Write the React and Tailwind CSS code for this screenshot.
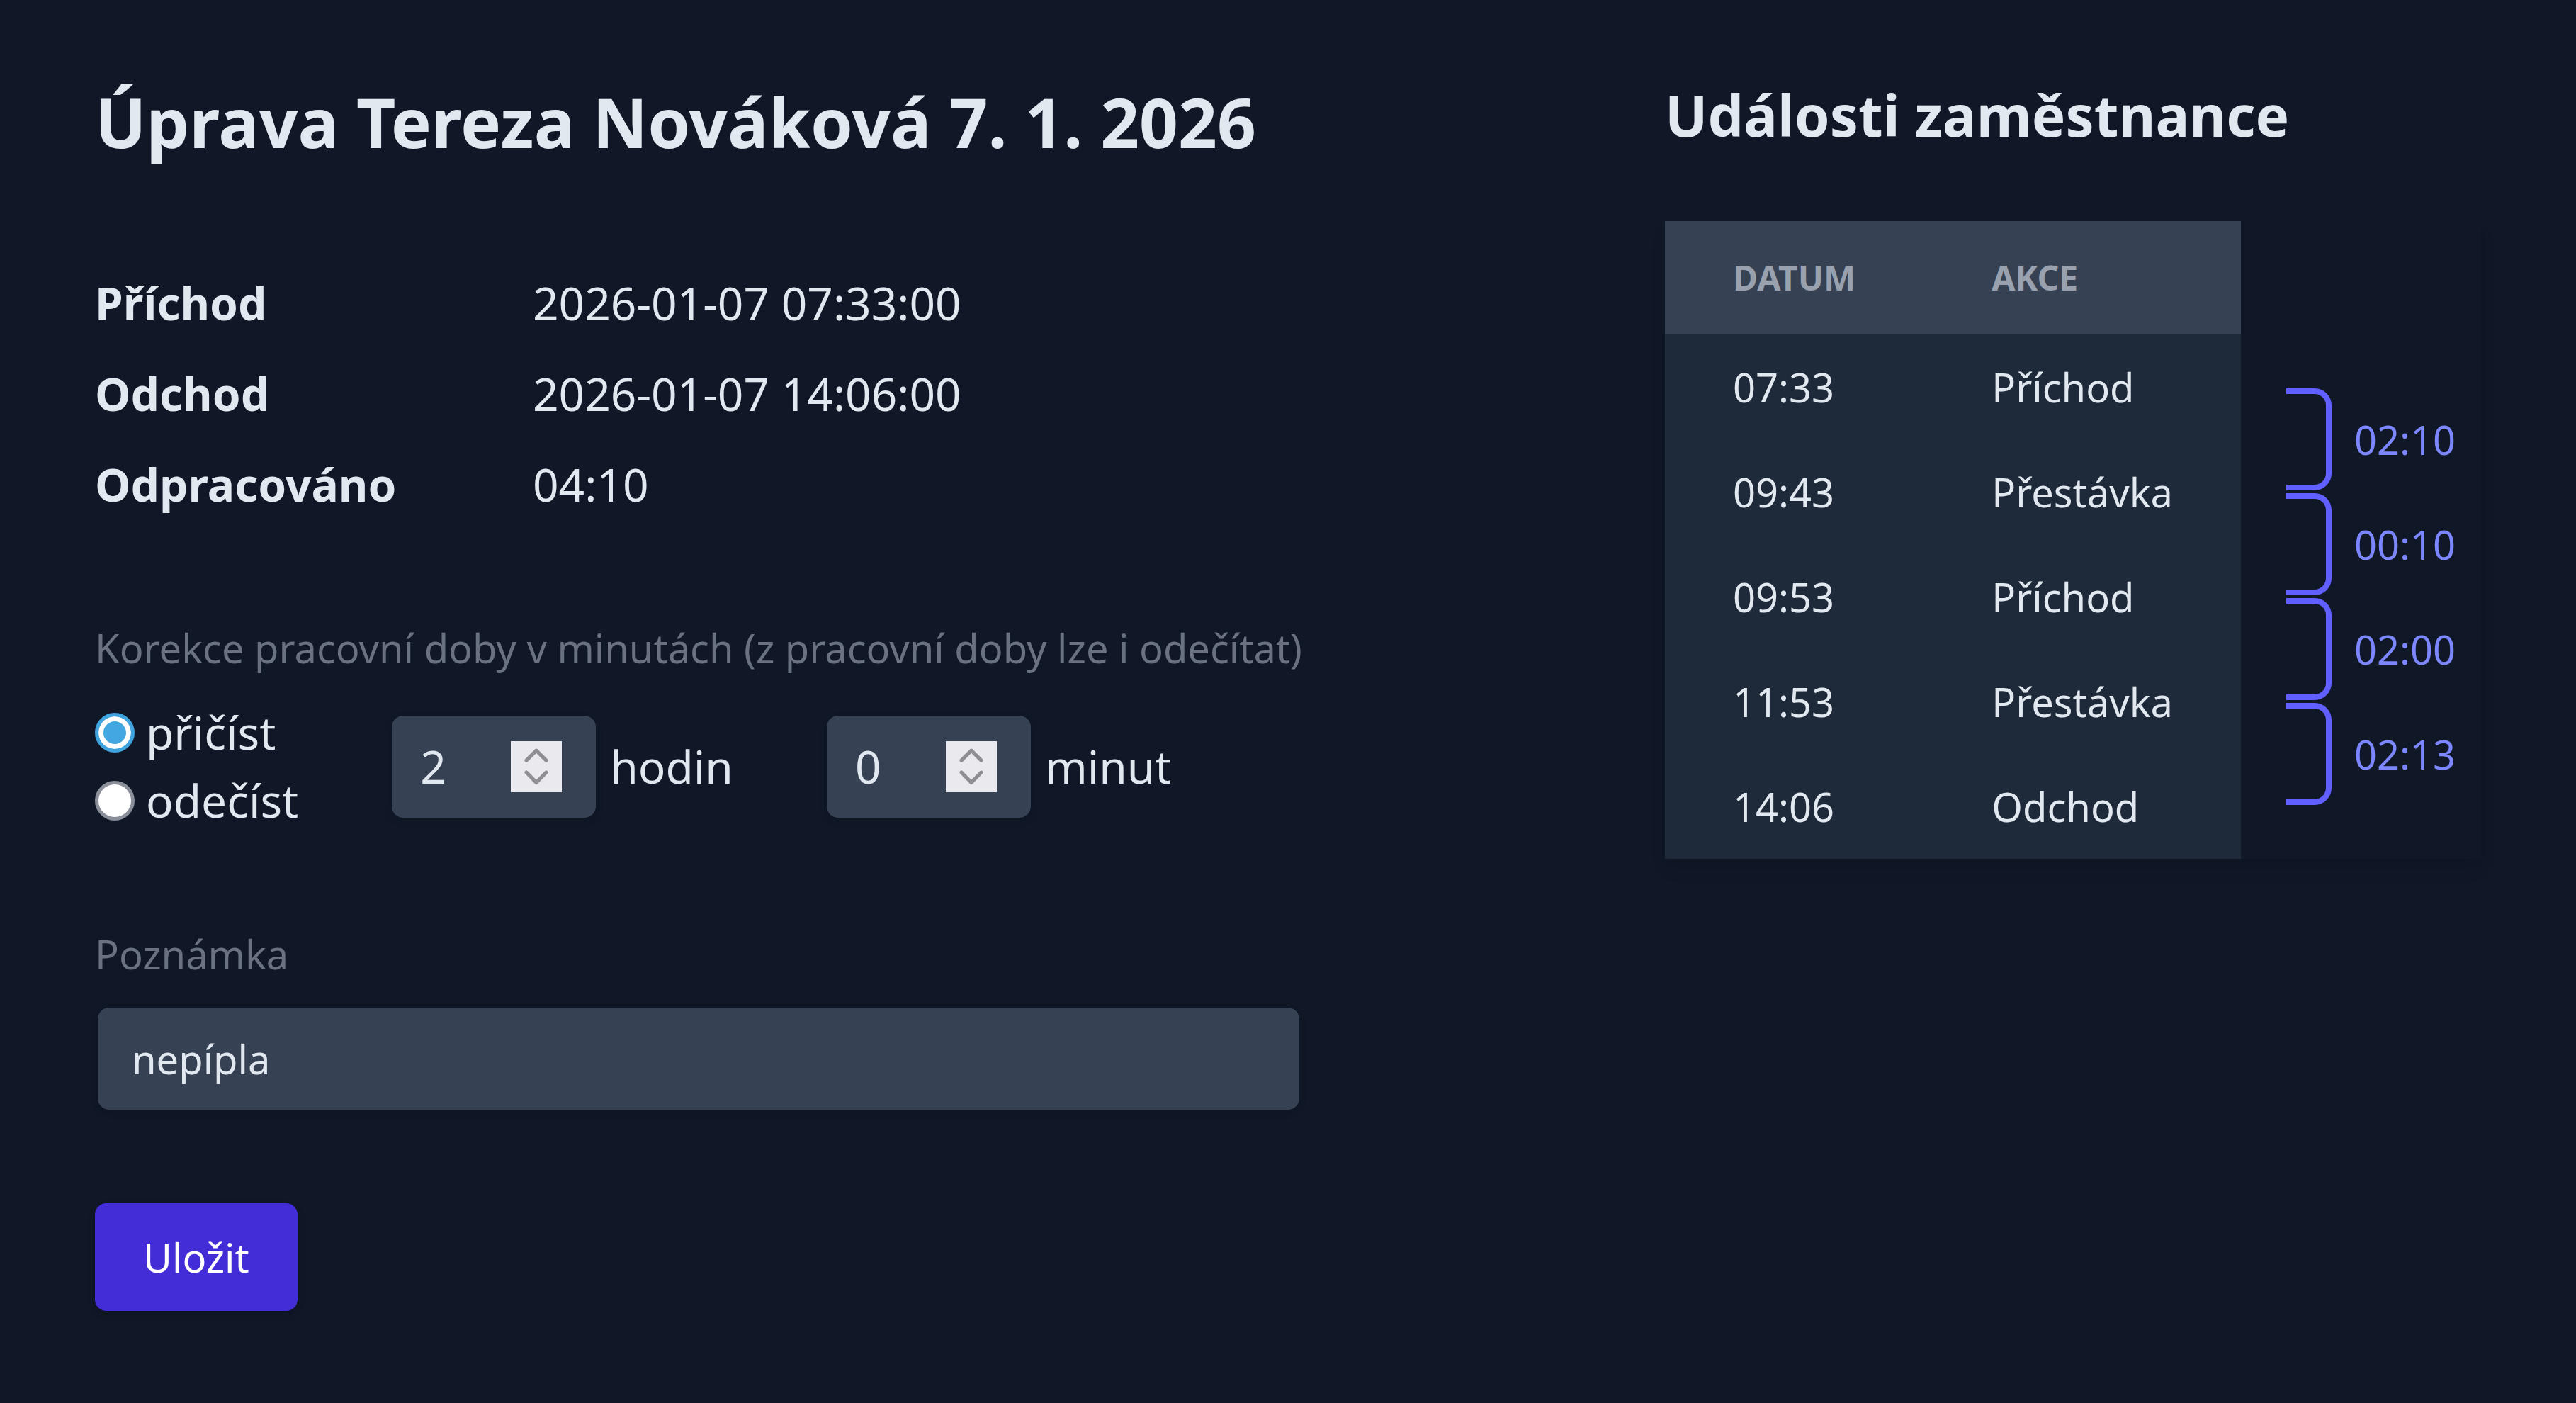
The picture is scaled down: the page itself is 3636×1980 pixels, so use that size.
import { useState } from 'react';

const events = [
  { time: '07:33', action: 'Příchod' },
  { time: '09:43', action: 'Přestávka' },
  { time: '09:53', action: 'Příchod' },
  { time: '11:53', action: 'Přestávka' },
  { time: '14:06', action: 'Odchod' },
];

const intervals = ['02:10', '00:10', '02:00', '02:13'];

const summary = [
  { label: 'Příchod', value: '2026-01-07 07:33:00' },
  { label: 'Odchod', value: '2026-01-07 14:06:00' },
  { label: 'Odpracováno', value: '04:10' },
];

const Spinner = () => (
  <span className="flex h-[18px] w-[18px] shrink-0 items-center justify-center bg-[#e9e9ee]">
    <svg viewBox="0 0 18 18" className="h-[18px] w-[18px]" fill="none" stroke="#8e8e93" strokeWidth="1.3" strokeLinecap="round" strokeLinejoin="round">
      <polyline points="5.5,6.8 9,3.3 12.5,6.8" />
      <polyline points="5.5,11 9,14.6 12.5,11" />
    </svg>
  </span>
);

const NumberField = ({ value, onChange, unit }) => (
  <div className="flex items-center">
    <div className="flex h-9 w-[72px] items-center rounded bg-gray-700 pr-3 pl-2.5 shadow-sm">
      <input
        type="number"
        value={value}
        onChange={(e) => onChange(e.target.value)}
        className="w-full min-w-0 bg-transparent text-base text-slate-200 outline-none [appearance:textfield] [&::-webkit-inner-spin-button]:appearance-none [&::-webkit-outer-spin-button]:appearance-none"
      />
      <Spinner />
    </div>
    <span className="ml-[5px] text-base text-slate-200">{unit}</span>
  </div>
);

const Radio = ({ checked, onChange, children }) => (
  <label className="flex h-6 items-center">
    <input
      type="radio"
      name="mode"
      checked={checked}
      onChange={onChange}
      className="h-3.5 w-3.5 appearance-none rounded-full border-[1.25px] border-[#8a8f99] bg-white checked:border-[#3fa3de] checked:bg-[#43a8e2] checked:shadow-[inset_0_0_0_1.75px_#fff]"
    />
    <span className="ml-1 text-base text-slate-200">{children}</span>
  </label>
);

export default function App() {
  const [mode, setMode] = useState('add');
  const [hours, setHours] = useState('2');
  const [minutes, setMinutes] = useState('0');
  const [note, setNote] = useState('nepípla');

  return (
    <div className="min-h-screen bg-gray-900 font-['Noto_Sans',sans-serif]">
      <div className="flex gap-32 pl-[33.5px] pt-[27px] [zoom:4]">
        <div className="w-[426px]">
          <h1 className="mb-8 text-2xl font-bold whitespace-nowrap text-slate-200">Úprava Tereza Nováková 7. 1. 2026</h1>

          <dl className="grid grid-cols-[154.5px_1fr] text-base text-slate-200">
            {summary.map((row) => (
              <div key={row.label} className="contents">
                <dt className="py-1 font-bold">{row.label}</dt>
                <dd className="py-1">{row.value}</dd>
              </div>
            ))}
          </dl>

          <p className="mt-[31.5px] mb-2 text-sm whitespace-nowrap text-gray-500">
            Korekce pracovní doby v minutách (z pracovní doby lze i odečítat)
          </p>
          <div className="flex items-center gap-[33px]">
            <div className="flex flex-col">
              <Radio checked={mode === 'add'} onChange={() => setMode('add')}>přičíst</Radio>
              <Radio checked={mode === 'sub'} onChange={() => setMode('sub')}>odečíst</Radio>
            </div>
            <NumberField value={hours} onChange={setHours} unit="hodin" />
            <NumberField value={minutes} onChange={setMinutes} unit="minut" />
          </div>

          <label className="mt-8 block text-sm text-gray-500">Poznámka</label>
          <input
            type="text"
            value={note}
            onChange={(e) => setNote(e.target.value)}
            className="mt-[9px] ml-[1px] block h-9 w-[424px] rounded bg-gray-700 px-3 text-sm text-slate-200 shadow-sm outline-none"
          />

          <button
            type="button"
            className="mt-[33px] rounded border border-transparent bg-indigo-700 px-4 py-2 text-sm text-white shadow-sm"
          >
            Uložit
          </button>
        </div>

        <div className="-mt-[0.5px] w-72">
          <h2 className="mb-[23.5px] text-xl font-bold whitespace-nowrap text-slate-200">Události zaměstnance</h2>
          <div className="flex bg-gray-900 shadow-md">
            <table className="self-start">
              <thead className="bg-gray-700">
                <tr>
                  <th className="px-6 py-3 text-left text-xs font-bold text-gray-400 uppercase">Datum</th>
                  <th className="px-6 py-3 text-left text-xs font-bold text-gray-400 uppercase">Akce</th>
                </tr>
              </thead>
              <tbody className="bg-gray-800">
                {events.map((ev) => (
                  <tr key={ev.time} className="h-[37px]">
                    <td className="px-6 py-2 text-sm whitespace-nowrap text-slate-200">{ev.time}</td>
                    <td className="px-6 py-2 text-sm whitespace-nowrap text-slate-200">{ev.action}</td>
                  </tr>
                ))}
              </tbody>
            </table>

            <div className="ml-4 pt-[59px]">
              {intervals.map((d, i) => (
                <div key={i} className="mb-px flex h-9 items-center">
                  <span className="h-9 w-4 rounded-r-md border-y-2 border-r-2 border-indigo-500" />
                  <span className="ml-2 text-sm text-indigo-400">{d}</span>
                </div>
              ))}
            </div>
          </div>
        </div>
      </div>
    </div>
  );
}
